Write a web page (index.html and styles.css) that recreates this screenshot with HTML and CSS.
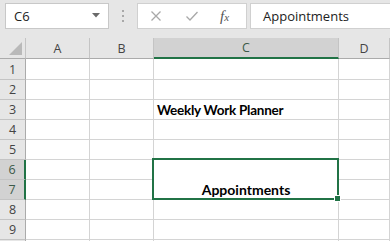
FILE: index.html
```html
<!DOCTYPE html>
<html>
<head>
<meta charset="utf-8">
<link rel="stylesheet" href="styles.css">
</head>
<body>
<div class="app">
  <div class="toolbar">
    <div class="namebox">
      <span class="name">C6</span>
      <svg class="caret" width="8" height="5" viewBox="0 0 8 5"><polygon points="0,0 8,0 4,4.5" fill="#6a6a6a"/></svg>
    </div>
    <div class="grip"><i></i><i></i><i></i></div>
    <div class="fxbtns">
      <svg class="btn" width="12" height="12" viewBox="0 0 12 12"><path d="M1.5 1.5 L10.5 10.5 M10.5 1.5 L1.5 10.5" stroke="#a8a8a8" stroke-width="1.3" fill="none"/></svg>
      <svg class="btn" width="14" height="12" viewBox="0 0 14 12"><path d="M1.5 6.5 L5 10 L12.5 2" stroke="#a8a8a8" stroke-width="1.3" fill="none"/></svg>
      <span class="fx">f<span class="fxs">x</span></span>
    </div>
    <div class="formula">Appointments</div>
  </div>
  <div class="sheet">
    <div class="h corner"><svg width="13" height="13" viewBox="0 0 13 13"><polygon points="13,0 13,13 0,13" fill="#b9b9b9"/></svg></div>
    <div class="h col">A</div>
    <div class="h col">B</div>
    <div class="h col sel-col">C</div>
    <div class="h col">D</div>

    <div class="h row">1</div><div class="c"></div><div class="c"></div><div class="c"></div><div class="c"></div>
    <div class="h row">2</div><div class="c"></div><div class="c"></div><div class="c"></div><div class="c"></div>
    <div class="h row">3</div><div class="c"></div><div class="c"></div><div class="c bold left title">Weekly Work Planner</div><div class="c"></div>
    <div class="h row">4</div><div class="c"></div><div class="c"></div><div class="c"></div><div class="c"></div>
    <div class="h row">5</div><div class="c"></div><div class="c"></div><div class="c"></div><div class="c"></div>
    <div class="h row sel-row">6</div><div class="c"></div><div class="c"></div>
    <div class="c merged bold"><span>Appointments</span><div class="selection"><div class="handle"></div></div></div>
    <div class="c"></div>
    <div class="h row sel-row">7</div><div class="c"></div><div class="c"></div><div class="c"></div>
    <div class="h row">8</div><div class="c"></div><div class="c"></div><div class="c"></div><div class="c"></div>
    <div class="h row">9</div><div class="c"></div><div class="c"></div><div class="c"></div><div class="c"></div>
    <div class="h row"></div><div class="c"></div><div class="c"></div><div class="c"></div><div class="c"></div>
  </div>
</div>
</body>
</html>
```
FILE: styles.css
```css
html, body {
  margin: 0;
  padding: 0;
  background: #ffffff;
}
body {
  width: 390px;
  height: 241px;
  overflow: hidden;
  font-family: "Open Sans", "Liberation Sans", sans-serif;
}
.app {
  width: 390px;
  height: 241px;
  display: flex;
  flex-direction: column;
  overflow: hidden;
}
.toolbar {
  height: 38px;
  flex: none;
  background: #e6e6e6;
  display: flex;
  align-items: flex-start;
  padding: 3px 0 0 5px;
  box-sizing: border-box;
}
.namebox {
  width: 104px;
  height: 26px;
  box-sizing: border-box;
  background: #fff;
  border: 1px solid #c8c8c8;
  display: flex;
  align-items: center;
  padding-left: 8px;
  padding-right: 8px;
  justify-content: space-between;
}
.name {
  font-size: 13px;
  color: #222;
}
.caret {
  margin-top: -1px;
}
.grip {
  width: 28px;
  height: 26px;
  display: flex;
  flex-direction: column;
  align-items: center;
  justify-content: center;
  gap: 3px;
}
.grip i {
  display: block;
  width: 2px;
  height: 2px;
  background: #a8a8a8;
}
.fxbtns {
  width: 110px;
  height: 26px;
  box-sizing: border-box;
  background: #fff;
  border: 1px solid #d0d0d0;
  display: flex;
  align-items: center;
  padding-left: 12px;
  gap: 23px;
}
.fx {
  font-family: "Liberation Serif", "DejaVu Serif", serif;
  font-style: italic;
  font-size: 15px;
  color: #555;
  margin-left: -2px;
}
.fxs {
  font-size: 11px;
}
.formula {
  margin-left: 3px;
  flex: 1;
  height: 26px;
  box-sizing: border-box;
  background: #fff;
  border: 1px solid #d0d0d0;
  border-right: none;
  padding-left: 12px;
  font-size: 13px;
  color: #222;
  display: flex;
  align-items: center;
}
.sheet {
  flex: 1;
  display: grid;
  grid-template-columns: 26px 64px 64px 185px 1fr;
  grid-template-rows: 21px 21px repeat(9, 20px);
  overflow: hidden;
}
.c, .h {
  box-sizing: border-box;
  border-right: 1px solid #d4d4d4;
  border-bottom: 1px solid #d4d4d4;
  min-width: 0;
}
.h {
  background: #e6e6e6;
  color: #444;
  font-size: 12.5px;
  display: flex;
  align-items: center;
  justify-content: center;
}
.col {
  border-right-color: #c4c4c4;
  border-bottom-color: #ababab;
}
.corner {
  border-right-color: #c4c4c4;
  border-bottom-color: #ababab;
  justify-content: flex-end;
  align-items: flex-end;
  padding: 0 3px 3px 0;
}
.row {
  border-right-color: #ababab;
  border-bottom-color: #c4c4c4;
}
.sel-col {
  background: #d2d2d2;
  border-bottom: 2px solid #217346;
  color: #3b5a49;
}
.sel-row {
  background: #d2d2d2;
  border-right: 2px solid #217346;
  color: #3b5a49;
}
.bold {
  font-family: "Lato", "Open Sans", sans-serif;
  font-weight: 700;
  font-size: 14px;
  color: #000;
  white-space: nowrap;
}
.title {
  font-size: 13.5px;
  letter-spacing: -0.25px;
}
.left {
  display: flex;
  align-items: flex-end;
  padding: 0 0 1px 3px;
}
.merged {
  grid-row: span 2;
  position: relative;
  display: flex;
  align-items: flex-end;
  justify-content: center;
  padding-bottom: 1px;
}
.selection {
  position: absolute;
  left: -2px;
  top: -2px;
  right: -1px;
  bottom: -1px;
  border: 2px solid #217346;
}
.handle {
  position: absolute;
  right: -4px;
  bottom: -4px;
  width: 5px;
  height: 5px;
  background: #217346;
  border: 1px solid #fff;
}
```
